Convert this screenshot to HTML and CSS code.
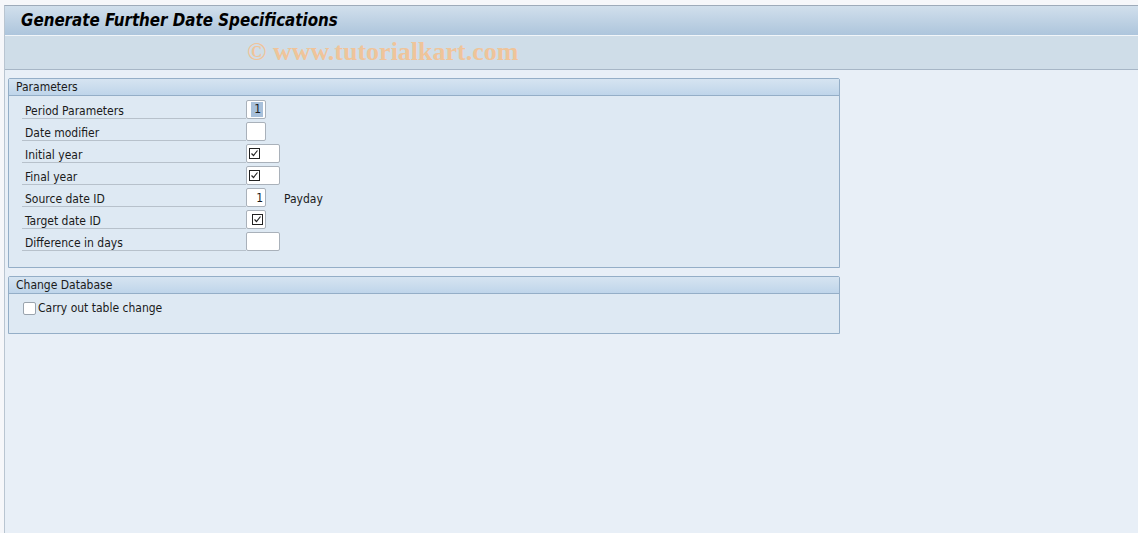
FILE: index.html
```html
<!DOCTYPE html>
<html lang="en">
<head>
  <meta charset="UTF-8" />
  <title>Generate Further Date Specifications</title>
  <link rel="stylesheet" href="styles.css">
</head>
<body>
  <div class="screen">
    <div class="titlebar">Generate Further Date Specifications</div>
    <div class="toolbar">
      <span class="watermark">© www.tutorialkart.com</span>
    </div>

    <div class="content">
      <div class="group">
        <div class="group-head">Parameters</div>
        <div class="group-body">
          <div class="row">
            <div class="lbl">Period Parameters</div>
            <div class="field short"><span class="sel">1</span></div>
          </div>
          <div class="row">
            <div class="lbl">Date modifier</div>
            <div class="field short"></div>
          </div>
          <div class="row">
            <div class="lbl">Initial year</div>
            <div class="field wide left">
              <svg class="tick" width="11" height="11" viewBox="0 0 11 11"><rect x="0.5" y="0.5" width="10" height="10" fill="none" stroke="#222" /><path d="M2.5 5.5 L4.5 7.5 L8.5 2.5" fill="none" stroke="#222" stroke-width="1.2" /></svg>
            </div>
          </div>
          <div class="row">
            <div class="lbl">Final year</div>
            <div class="field wide left">
              <svg class="tick" width="11" height="11" viewBox="0 0 11 11"><rect x="0.5" y="0.5" width="10" height="10" fill="none" stroke="#222" /><path d="M2.5 5.5 L4.5 7.5 L8.5 2.5" fill="none" stroke="#222" stroke-width="1.2" /></svg>
            </div>
          </div>
          <div class="row">
            <div class="lbl">Source date ID</div>
            <div class="field short">1</div>
            <div class="desc">Payday</div>
          </div>
          <div class="row">
            <div class="lbl">Target date ID</div>
            <div class="field short">
              <svg class="tick" width="11" height="11" viewBox="0 0 11 11"><rect x="0.5" y="0.5" width="10" height="10" fill="none" stroke="#222" /><path d="M2.5 5.5 L4.5 7.5 L8.5 2.5" fill="none" stroke="#222" stroke-width="1.2" /></svg>
            </div>
          </div>
          <div class="row">
            <div class="lbl">Difference in days</div>
            <div class="field wide"></div>
          </div>
        </div>
      </div>

      <div class="group">
        <div class="group-head">Change Database</div>
        <div class="group-body check-body">
          <label class="check"><span class="box"></span>Carry out table change</label>
        </div>
      </div>
    </div>
  </div>
</body>
</html>
```

FILE: styles.css
```css
html, body {
  height: 100%;
}
body {
  margin: 0;
  background: #f6f7fa;
  font-family: "DejaVu Sans Condensed", "DejaVu Sans", sans-serif;
  font-size: 11px;
  color: #1a1a1a;
  overflow: hidden;
}
.screen {
  margin: 5px 0 0 4px;
  height: calc(100% - 5px);
  border-left: 1px solid #b9c5d1;
  border-top: 1px solid #9eabba;
  background: #e8eff7;
  box-sizing: border-box;
}
.titlebar {
  height: 29px;
  background: linear-gradient(#d1dfec, #adc5dc);
  border-bottom: 1px solid #f1f5f9;
  padding-left: 16px;
  font-size: 16.8px;
  font-weight: bold;
  font-style: italic;
  line-height: 28px;
  color: #000;
}
.toolbar {
  height: 33px;
  background: #cfdde8;
  border-bottom: 1px solid #a7b6c6;
  padding-left: 242px;
  line-height: 31px;
}
.watermark {
  font-family: "Liberation Serif", serif;
  font-weight: bold;
  font-size: 26px;
  color: #efc49a;
}
.content {
  padding: 8px 0 0 3px;
}
.group {
  width: 832px;
  box-sizing: border-box;
  border: 1px solid #94aec7;
  border-radius: 2px 2px 0 0;
  background: #dee9f3;
  margin-bottom: 8px;
}
.group-head {
  height: 16px;
  line-height: 16px;
  padding-left: 7px;
  background: linear-gradient(#d6e4f1, #bfd5ea);
  border-bottom: 1px solid #94aec7;
  font-size: 12px;
}
.group-body {
  padding: 1px 0 16px 13px;
}
.row {
  display: flex;
  align-items: flex-end;
  height: 22px;
}
.lbl {
  width: 221px;
  height: 21px;
  line-height: 28px;
  padding-left: 3px;
  border-bottom: 1px solid #b7c1cb;
  font-size: 12px;
}
.field {
  height: 19px;
  box-sizing: border-box;
  background: #fff;
  border: 1px solid #a9b1ba;
  border-radius: 2px;
  display: flex;
  align-items: center;
  justify-content: flex-end;
  padding-right: 2px;
  font-size: 12px;
}
.field.short {
  width: 20px;
}
.field.wide {
  width: 34px;
}
.field.left {
  justify-content: flex-start;
  padding-left: 2px;
}
.sel {
  background: #a8c0da;
  padding: 0 2px 0 3px;
  line-height: 15px;
}
.tick {
  display: block;
}
.desc {
  margin-left: 18px;
  height: 22px;
  line-height: 28px;
  font-size: 12px;
}
.check-body {
  padding: 7px 0 18px 14px;
}
.check {
  display: flex;
  align-items: center;
  font-size: 12px;
}
.box {
  width: 13px;
  height: 13px;
  box-sizing: border-box;
  background: #fff;
  border: 1px solid #9aa4ae;
  border-radius: 2px;
  margin-right: 2px;
}
```
